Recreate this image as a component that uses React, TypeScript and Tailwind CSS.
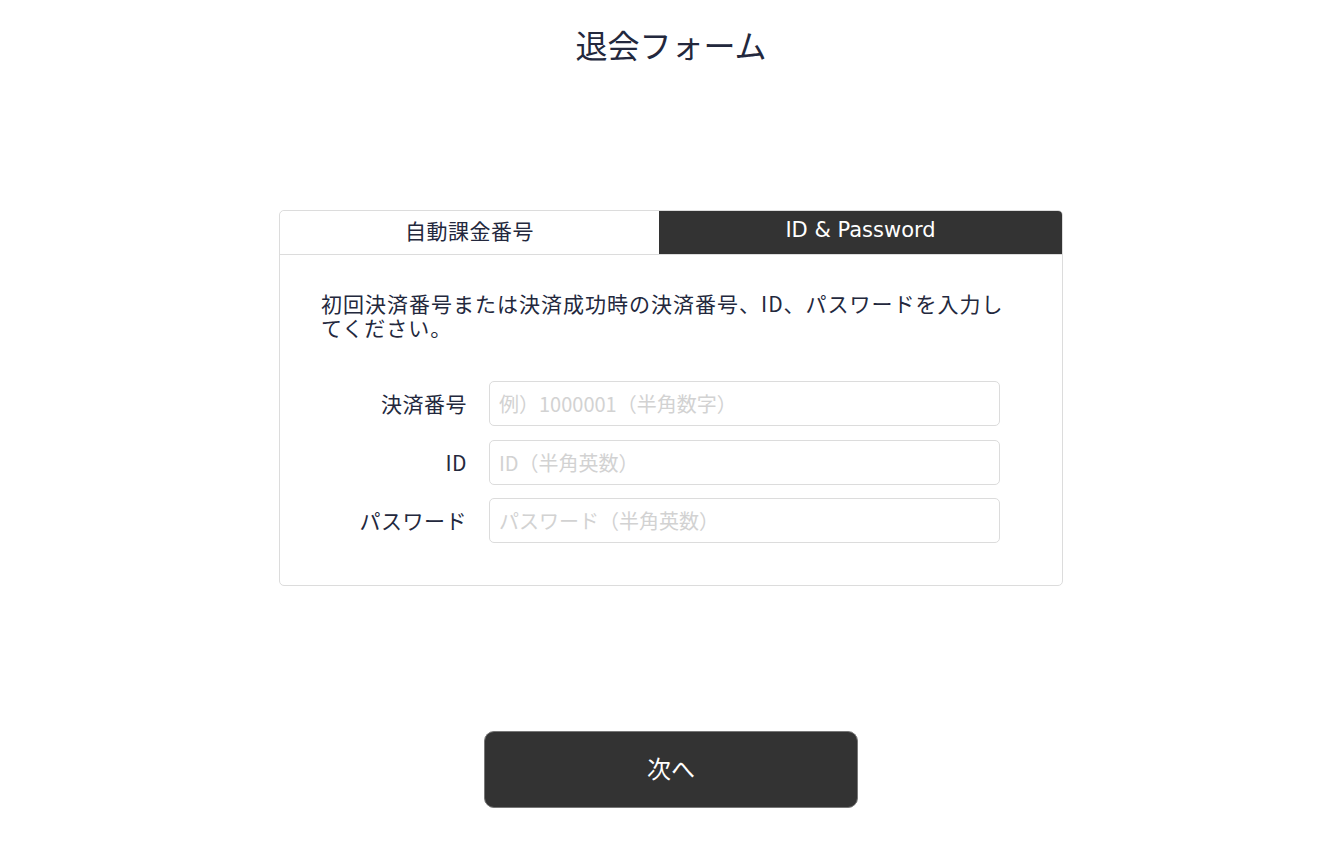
import React from 'react';

const font = { fontFamily: '"Noto Sans CJK JP", "Noto Sans", sans-serif' };

const Field: React.FC<{ label: string; placeholder: string; type?: string; className?: string }> = ({ label, placeholder, type = 'text', className = '' }) => (
  <div className={`flex items-center ${className}`}>
    <label className="w-[146px] shrink-0 pb-[2px] text-right text-[21px] leading-[24px] tracking-[0.5px] text-[#23283d]">{label}</label>
    <input
      type={type}
      placeholder={placeholder}
      className="ml-[22px] h-[45px] w-[511px] rounded-[5px] border border-[#dcdcdc] bg-white pl-[9px] text-[20px] text-[#23283d] outline-none placeholder:text-[#d2d2d2]"
    />
  </div>
);

export default function App() {
  const [tab, setTab] = React.useState<'auto' | 'id'>('id');

  return (
    <div className="min-h-screen bg-white pl-[9px]" style={font}>
      <div className="mx-auto flex w-[784px] flex-col items-center">
        <h1 className="pt-[24px] text-[32px] leading-[40px] font-normal text-[#23283d]">退会フォーム</h1>

        <div className="mt-[146px] w-full rounded-[5px] border border-[#dcdcdc] bg-white">
          <div className="flex h-[44px] border-b border-[#dcdcdc]">
            <button
              onClick={() => setTab('auto')}
              className={`w-[379px] rounded-tl-[5px] pb-[4px] text-[21px] tracking-[0.5px] ${tab === 'auto' ? 'bg-[#333] text-white' : 'bg-white text-[#23283d]'}`}
            >
              自動課金番号
            </button>
            <button
              onClick={() => setTab('id')}
              className={`flex-1 rounded-tr-[4px] pb-[3px] text-[21px] ${tab === 'id' ? 'bg-[#333] text-white' : 'bg-white text-[#23283d]'}`}
              style={{ fontFamily: '"DejaVu Sans", "Noto Sans CJK JP", sans-serif' }}
            >
              ID &amp; Password
            </button>
          </div>

          <div className="px-[41px] pt-[36px] pb-[42px]">
            <p className="w-[690px] text-[21px] leading-[24px] tracking-[1px] text-[#23283d]">
              初回決済番号または決済成功時の決済番号、ID、パスワードを入力してください。
            </p>
            <div className="mt-[42px]">
              <Field label="決済番号" placeholder="例）1000001（半角数字）" />
              <Field className="mt-[14px]" label="ID" placeholder="ID（半角英数）" />
              <Field className="mt-[13px]" label="パスワード" placeholder="パスワード（半角英数）" type="password" />
            </div>
          </div>
        </div>

        <button className="mt-[145px] mb-[33px] h-[77px] w-[374px] rounded-[10px] border border-[#777] bg-[#333] pb-[4px] text-[24px] text-white">
          次へ
        </button>
      </div>
    </div>
  );
}
